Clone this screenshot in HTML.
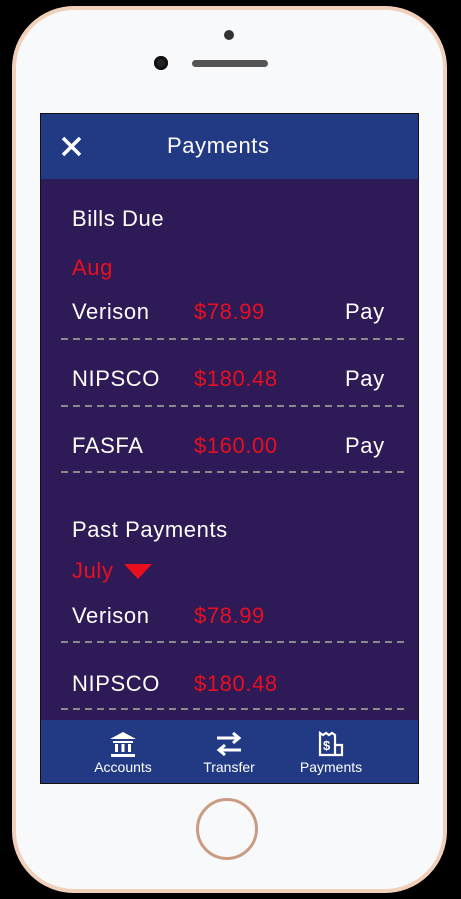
<!DOCTYPE html><html><head><style>
body{margin:0;width:461px;height:899px;background:#000;position:relative;overflow:hidden;font-family:"Liberation Sans",sans-serif}
.ph{position:absolute;left:12px;top:6px;width:427px;height:879px;border:4px solid #f0d0bb;border-radius:62px;background:#f8f9fb}
.scr{position:absolute;left:40px;top:113px;width:377px;height:669px;border:1.5px solid #111;background:#2e1a57;overflow:hidden}
.hd{position:absolute;left:0;top:0;width:100%;height:65px;background:#223a84;color:#fff}
.t{position:absolute;font-size:22px;color:#fff;line-height:1;letter-spacing:0.6px}
.r{color:#e8101e}
.dl{position:absolute;left:20px;width:344px;height:1.5px;background:repeating-linear-gradient(90deg,#8a8a8a 0 7px,transparent 7px 12px)}
.nav{position:absolute;left:0;top:606px;width:100%;height:63px;background:#223a84;color:#fff;font-size:14px}
.nav div{position:absolute;top:39px;width:80px;text-align:center}
</style></head><body>
<div class="ph"></div>
<div style="position:absolute;left:224px;top:30px;width:10px;height:10px;border-radius:50%;background:#333"></div>
<div style="position:absolute;left:154px;top:56px;width:14px;height:14px;border-radius:50%;background:#222;box-shadow:inset 0 0 0 3px #111"></div>
<div style="position:absolute;left:192px;top:60px;width:76px;height:7px;border-radius:4px;background:#555"></div>
<div style="position:absolute;left:196px;top:798px;width:62px;height:62px;border-radius:50%;border:3px solid #c99b82;box-sizing:border-box"></div>
<div class="scr">
<div class="hd">
<svg style="position:absolute;left:20px;top:22px" width="21" height="21"><path d="M2 2L19 19M19 2L2 19" stroke="#fff" stroke-width="3.5"/></svg>
<div class="t" style="left:126px;top:21px">Payments</div>
</div>
<div class="t" style="left:31px;top:94px">Bills Due</div>
<div class="t r" style="left:31px;top:143px">Aug</div>
<div class="t" style="left:31px;top:187px">Verison</div><div class="t r" style="left:153px;top:187px">$78.99</div><div class="t" style="left:304px;top:187px">Pay</div>
<div class="dl" style="top:224px"></div>
<div class="t" style="left:31px;top:254px">NIPSCO</div><div class="t r" style="left:153px;top:254px">$180.48</div><div class="t" style="left:304px;top:254px">Pay</div>
<div class="dl" style="top:291px"></div>
<div class="t" style="left:31px;top:321px">FASFA</div><div class="t r" style="left:153px;top:321px">$160.00</div><div class="t" style="left:304px;top:321px">Pay</div>
<div class="dl" style="top:357px"></div>
<div class="t" style="left:31px;top:405px">Past Payments</div>
<div class="t r" style="left:31px;top:446px">July</div>
<svg style="position:absolute;left:83px;top:450px" width="28" height="16"><path d="M0 0H28L14 15Z" fill="#e8101e"/></svg>
<div class="t" style="left:31px;top:491px">Verison</div><div class="t r" style="left:153px;top:491px">$78.99</div>
<div class="dl" style="top:527px"></div>
<div class="t" style="left:31px;top:559px">NIPSCO</div><div class="t r" style="left:153px;top:559px">$180.48</div>
<div class="dl" style="top:594px"></div>
<div class="nav">
<svg style="position:absolute;left:69px;top:12px" width="26" height="25"><path d="M13 0L26 7H0Z M1 22H25V25H1Z M3 9H23V11H3Z" fill="#fff"/><rect x="5" y="12" width="3" height="8" fill="#fff"/><rect x="11.5" y="12" width="3" height="8" fill="#fff"/><rect x="18" y="12" width="3" height="8" fill="#fff"/></svg>
<svg style="position:absolute;left:175px;top:12px" width="26" height="24"><path d="M1 6H22M17 1L23 6L17 11M25 18H4M9 13L3 18L9 23" stroke="#fff" stroke-width="3" fill="none"/></svg>
<svg style="position:absolute;left:277px;top:11px" width="26" height="26"><path d="M2 2L5 4L8 2L11 4L14 2L17 4V24H2Z M17 14H24V24H17" stroke="#fff" stroke-width="2.2" fill="none"/><text x="5" y="19" font-size="13" font-weight="bold" fill="#fff" font-family="Liberation Sans">$</text></svg>
<div style="left:42px">Accounts</div><div style="left:148px">Transfer</div><div style="left:250px">Payments</div>
</div>
</div>
</body></html>
